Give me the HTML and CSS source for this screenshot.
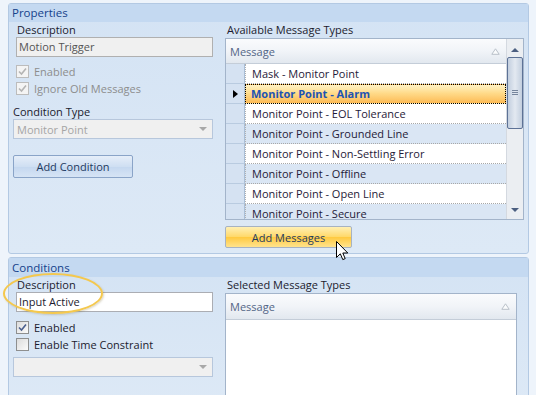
FILE: index.html
```html
<!DOCTYPE html>
<html lang="en">
<head>
    <meta charset="UTF-8">
    <title>Motion Trigger</title>
    <link rel="stylesheet" href="styles.css">
</head>
<body>
    <div class="screen">
        <!-- Properties -->
        <section class="panel panel-props">
            <div class="panel-head">Properties</div>
            <div class="panel-body">
                <div class="col-left">
                    <div class="field-label">Description</div>
                    <div class="textbox disabled">Motion Trigger</div>
                    <div class="checks">
                        <div class="check disabled">
                            <span class="box"><svg viewBox="0 0 11 11"><polyline points="2,5.5 4.5,8 9,2.5"/></svg></span>
                            Enabled
                        </div>
                        <div class="check disabled">
                            <span class="box"><svg viewBox="0 0 11 11"><polyline points="2,5.5 4.5,8 9,2.5"/></svg></span>
                            Ignore Old Messages
                        </div>
                    </div>
                    <div class="field-label flush">Condition Type</div>
                    <div class="combo disabled">
                        <span>Monitor Point</span>
                        <span class="combo-arrow"></span>
                    </div>
                    <div class="btn btn-cond">Add Condition</div>
                </div>

                <div class="col-right">
                    <div class="field-label">Available Message Types</div>
                    <div class="grid grid-available">
                        <div class="grid-main">
                            <div class="grid-head">
                                <span>Message</span>
                                <svg class="sort" width="9" height="7" viewBox="0 0 9 7"><path d="M4.5 0.8 L8.2 6.3 L0.8 6.3 Z"/></svg>
                            </div>
                            <div class="row"><span class="rh"></span><span class="cell">Mask - Monitor Point</span></div>
                            <div class="row selected"><span class="rh"><span class="row-arrow"></span></span><span class="cell">Monitor Point - Alarm</span></div>
                            <div class="row"><span class="rh"></span><span class="cell">Monitor Point - EOL Tolerance</span></div>
                            <div class="row alt"><span class="rh"></span><span class="cell">Monitor Point - Grounded Line</span></div>
                            <div class="row"><span class="rh"></span><span class="cell">Monitor Point - Non-Settling Error</span></div>
                            <div class="row alt"><span class="rh"></span><span class="cell">Monitor Point - Offline</span></div>
                            <div class="row"><span class="rh"></span><span class="cell">Monitor Point - Open Line</span></div>
                            <div class="row alt"><span class="rh"></span><span class="cell">Monitor Point - Secure</span></div>
                        </div>
                        <div class="scrollbar">
                            <span class="sb-up"></span>
                            <span class="sb-thumb"><span class="grip"></span></span>
                            <span class="sb-down"></span>
                        </div>
                    </div>
                    <div class="btn btn-hot">Add Messages</div>
                </div>
            </div>
        </section>

        <!-- Conditions -->
        <section class="panel panel-conds">
            <div class="panel-head">Conditions</div>
            <div class="panel-body">
                <div class="col-left">
                    <div class="field-label">Description</div>
                    <div class="textbox">Input Active</div>
                    <div class="checks">
                        <div class="check">
                            <span class="box"><svg viewBox="0 0 11 11"><polyline points="2,5.5 4.5,8 9,2.5"/></svg></span>
                            Enabled
                        </div>
                        <div class="check">
                            <span class="box"></span>
                            Enable Time Constraint
                        </div>
                    </div>
                    <div class="combo disabled combo-empty">
                        <span></span>
                        <span class="combo-arrow"></span>
                    </div>
                </div>

                <div class="col-right">
                    <div class="field-label">Selected Message Types</div>
                    <div class="grid grid-selected">
                        <div class="grid-main">
                            <div class="grid-head">
                                <span>Message</span>
                                <svg class="sort" width="9" height="7" viewBox="0 0 9 7"><path d="M4.5 0.8 L8.2 6.3 L0.8 6.3 Z"/></svg>
                            </div>
                        </div>
                    </div>
                </div>
            </div>
        </section>

        <div class="highlight"></div>

        <svg class="cursor" width="13" height="20" viewBox="0 0 13 20">
            <path d="M0.5 0.5 L0.5 16.5 L4.3 12.8 L6.8 18.6 L9.2 17.6 L6.8 12 L11.8 12 Z" fill="#fff" stroke="#000" stroke-width="1" stroke-linejoin="miter"/>
        </svg>
    </div>
</body>
</html>
```

FILE: styles.css
```css
* {
    box-sizing: border-box;
}

body {
    margin: 0;
    background: #eef4fb;
    font-family: "Open Sans", sans-serif;
    font-size: 11px;
    color: #1b1b2e;
}

.screen {
    position: relative;
    width: 536px;
    height: 395px;
    overflow: hidden;
    padding: 3px 0 0 8px;
}

.panel {
    width: 521px;
    border: 1px solid #b3c9e3;
    border-radius: 3px;
    background: linear-gradient(#d4e3f4, #dde9f6);
}

.panel-props {
    height: 251px;
}

.panel-conds {
    margin-top: 3px;
    height: 150px;
}

.panel-head {
    height: 18px;
    line-height: 18px;
    padding-left: 3px;
    background: #c4d9f1;
    color: #15428b;
    font-size: 11.5px;
}

.panel-conds .panel-head {
    height: 19px;
    line-height: 19px;
}

.panel-body {
    display: grid;
    grid-template-columns: 200px 299px;
    column-gap: 12px;
    padding-left: 4px;
}

.panel-conds .panel-body {
    grid-template-columns: 200px 292px;
}

.field-label {
    height: 15px;
    line-height: 15px;
    padding-left: 4px;
    white-space: nowrap;
}

.col-right .field-label {
    padding-left: 2px;
    height: 16px;
}

.field-label.flush {
    padding-left: 0;
    margin-top: 10px;
    height: 14px;
    line-height: 14px;
}

.textbox {
    margin-left: 3px;
    width: 197px;
    height: 20px;
    line-height: 18px;
    padding-left: 2px;
    background: #fff;
    border: 1px solid #abadb3;
    white-space: nowrap;
}

.textbox.disabled {
    background: #f0f0f0;
    border-color: #b0b0b0;
    color: #555;
}

.checks {
    margin-top: 8px;
    display: flex;
    flex-direction: column;
    gap: 4px;
}

.panel-conds .checks {
    margin-top: 9px;
}

.check {
    display: flex;
    align-items: center;
    gap: 5px;
    height: 13px;
    padding-left: 3px;
    white-space: nowrap;
}

.check.disabled {
    color: #8d8d8d;
}

.box {
    width: 13px;
    height: 13px;
    border: 1px solid #8e8f8f;
    background: linear-gradient(135deg, #dcdcdc, #fbfbfb);
    display: flex;
    align-items: center;
    justify-content: center;
}

.check.disabled .box {
    border-color: #bcbcbc;
    background: #f4f4f4;
}

.box svg {
    width: 11px;
    height: 11px;
    fill: none;
    stroke: #4a5f8e;
    stroke-width: 1.6;
}

.check.disabled .box svg {
    stroke: #b4b4b4;
}

.combo {
    display: flex;
    justify-content: space-between;
    align-items: center;
    width: 200px;
    height: 20px;
    padding: 0 5px 0 3px;
    border: 1px solid #b7c7dc;
    background: #f0f0f0;
    color: #a5a5a5;
    white-space: nowrap;
}

.combo-arrow {
    width: 0;
    height: 0;
    border-left: 4px solid transparent;
    border-right: 4px solid transparent;
    border-top: 4px solid #a8a8a8;
}

.panel-conds .combo {
    margin-top: 6px;
}

.btn {
    display: flex;
    align-items: center;
    justify-content: center;
    border: 1px solid #8aa4c8;
    border-radius: 2px;
    color: #1e3a5f;
    white-space: nowrap;
}

.btn-cond {
    margin-top: 16px;
    width: 120px;
    height: 23px;
    background: linear-gradient(#e6eef9, #cfdff2 50%, #c4d7ef 51%, #d6e4f5);
}

.btn-hot {
    margin-top: 6px;
    width: 127px;
    height: 22px;
    border-color: #a7b3c2;
    background: linear-gradient(#fff0b5, #ffd868 50%, #ffc93f 51%, #ffe38d);
}

/* grids */
.grid {
    display: flex;
    border: 1px solid #a3b4ca;
    background: #fff;
}

.grid-available {
    width: 299px;
    height: 182px;
}

.grid-selected {
    width: 292px;
    height: 130px;
}

.grid-main {
    flex: 1;
    overflow: hidden;
}

.grid-head {
    display: flex;
    justify-content: space-between;
    align-items: center;
    height: 25px;
    padding: 0 6px 0 4px;
    background: linear-gradient(#fafbfd, #f1f4f8 50%, #e2e8ef);
    border-bottom: 1px solid #c4cdd8;
    color: #536586;
}

.grid-selected .grid-head {
    height: 26px;
}

.sort {
    fill: #fbfcfd;
    stroke: #b9c0c9;
    stroke-width: 1;
}

.row {
    display: flex;
    height: 20px;
}

.rh {
    width: 19px;
    flex: none;
    background: #d5e2f2;
    border-right: 1px solid #aabfd8;
    border-bottom: 1px solid #b9cbe0;
    display: flex;
    align-items: center;
    justify-content: center;
}

.row-arrow {
    width: 0;
    height: 0;
    border-top: 4px solid transparent;
    border-bottom: 4px solid transparent;
    border-left: 5px solid #000;
}

.cell {
    flex: 1;
    padding-left: 6px;
    line-height: 19px;
    border-left: 1px dotted #b0b0b0;
    border-bottom: 1px dotted #a8a8a8;
    white-space: nowrap;
    color: #1f1a38;
}

.row.alt .cell {
    background: #dae6f4;
}

.row.selected .cell {
    background: linear-gradient(#fff3c6, #ffdb8a 45%, #fdbb55);
    border: 1px dotted #000;
    color: #1d53b3;
    font-weight: bold;
    padding-left: 5px;
    line-height: 18px;
}

.scrollbar {
    width: 17px;
    flex: none;
    position: relative;
    background: #ebeef2;
    border-left: 1px solid #d4d9e0;
}

.sb-up,
.sb-down {
    position: absolute;
    left: 4px;
    width: 0;
    height: 0;
    border-left: 4px solid transparent;
    border-right: 4px solid transparent;
}

.sb-up {
    top: 9px;
    border-bottom: 4px solid #4b5e80;
}

.sb-down {
    top: 169px;
    border-top: 4px solid #4b5e80;
}

.sb-thumb {
    position: absolute;
    left: 0;
    top: 18px;
    width: 16px;
    height: 72px;
    border: 1px solid #5d7296;
    border-radius: 2px;
    background: linear-gradient(90deg, #c3cfdf, #e3e9f1 50%, #c3cfdf);
}

.grip {
    position: absolute;
    left: 4px;
    top: 32px;
    width: 6px;
    height: 5px;
    border-top: 1px solid #76859c;
    border-bottom: 1px solid #76859c;
}

.grip::after {
    content: "";
    position: absolute;
    left: 0;
    right: 0;
    top: 1px;
    border-top: 1px solid #76859c;
}

/* overlays */
.highlight {
    position: absolute;
    left: 3px;
    top: 273px;
    width: 100px;
    height: 41px;
    border: 2px solid #f4c84e;
    border-radius: 50%;
    box-shadow: 1px 1px 2px rgba(120, 100, 40, 0.25);
}

.cursor {
    position: absolute;
    left: 336px;
    top: 241px;
}
```
